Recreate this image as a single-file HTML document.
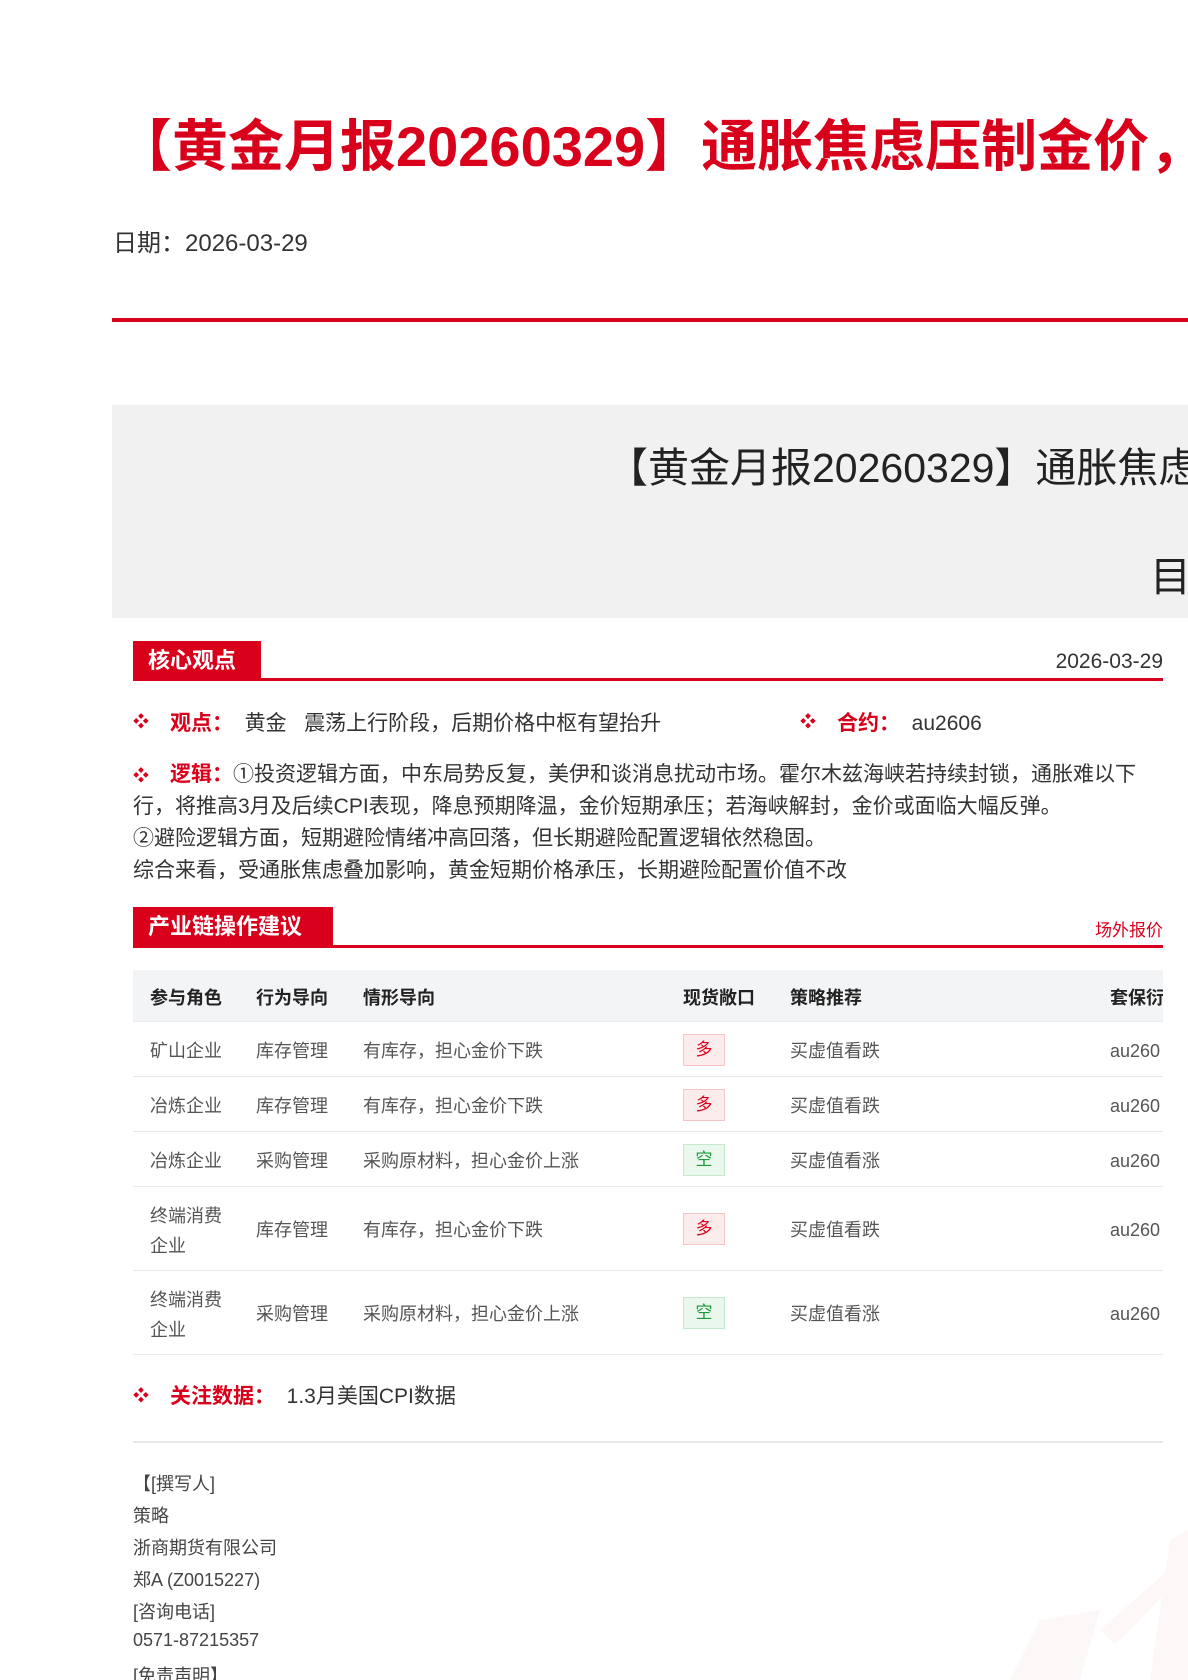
<!DOCTYPE html>
<html><head><meta charset="utf-8"><style>
*{margin:0;padding:0;box-sizing:border-box}
html,body{width:1188px;height:1680px;overflow:hidden}
body{background:#fff;position:relative;font-family:"Liberation Sans","Noto Sans CJK SC",sans-serif;color:#333}
.clip{position:absolute;left:0;top:0;width:1188px;height:1680px;overflow:hidden}
.a{position:absolute;white-space:nowrap}
.red{color:#d9001b}
.tag{position:absolute;left:133px;width:128px;height:40px;background:#d9001b;color:#fff;font-size:22px;font-weight:bold;line-height:40px;padding-left:15px}
.rl{position:absolute;left:133px;width:1030px;height:3px;background:#d9001b}
.dot{position:absolute;color:#d9001b;font-size:16px}
.row{position:absolute;left:133px;width:1030px;border-bottom:1px solid #e6e9ee}
.c{position:absolute;font-size:18px;line-height:24px;color:#555;white-space:nowrap}
.b{position:absolute;left:683px;width:42px;height:32px;font-size:17px;text-align:center;line-height:30px}
.bm{background:#fdecec;border:1px solid #f7c5c5;color:#d9001b}
.bk{background:#e9f7ec;border:1px solid #c3e8cb;color:#1a9a3a}
.f{position:absolute;left:133px;font-size:18px;color:#444}
</style></head><body><div class="clip">
<svg class="a" style="left:900px;top:1480px;opacity:.5" width="288" height="200"><polygon points="270,60 288,50 288,200 250,200" fill="#fdf0f0"/><polygon points="110,200 140,140 200,130 180,200" fill="#fdf3f3"/><polygon points="200,150 280,80 288,90 215,165" fill="#fdf0f0"/></svg>
<div class="a red" style="left:116px;top:112px;font-size:56px;font-weight:bold;line-height:70px;width:1072px;overflow:hidden">【黄金月报20260329】通胀焦虑压制金价，</div>
<div class="a" style="left:113px;top:223px;font-size:24px;color:#333">日期：2026-03-29</div>
<div class="a" style="left:112px;top:318px;width:1076px;height:4px;background:#d9001b"></div>
<div class="a" style="left:112px;top:405px;width:1076px;height:213px;background:#f1f1f1;overflow:hidden">
<div class="a" style="left:495px;top:29px;font-size:41px;color:#222">【黄金月报20260329】通胀焦虑压制</div>
<div class="a" style="left:1038px;top:138px;font-size:41px;color:#222">目</div>
</div>
<div class="tag" style="top:641px">核心观点</div>
<div class="rl" style="top:678px"></div>
<div class="a" style="right:25px;top:650px;font-size:21px;color:#333">2026-03-29</div>
<div class="dot" style="left:133px;top:708px">❖</div>
<div class="a" style="left:170px;top:707px;font-size:21px"><b class="red">观点：</b>&nbsp; 黄金 &nbsp;&nbsp;震荡上行阶段，后期价格中枢有望抬升</div>
<div class="dot" style="left:800px;top:708px">❖</div>
<div class="a" style="left:837px;top:707px;font-size:21px"><b class="red">合约：</b>&nbsp; au2606</div>
<div class="dot" style="left:133px;top:762px">❖</div>
<div class="a" style="left:133px;top:759px;font-size:21px;line-height:32px"><span style="margin-left:37px"><b class="red">逻辑：</b></span>①投资逻辑方面，中东局势反复，美伊和谈消息扰动市场。霍尔木兹海峡若持续封锁，通胀难以下<br>行，将推高3月及后续CPI表现，降息预期降温，金价短期承压；若海峡解封，金价或面临大幅反弹。<br>②避险逻辑方面，短期避险情绪冲高回落，但长期避险配置逻辑依然稳固。<br>综合来看，受通胀焦虑叠加影响，黄金短期价格承压，长期避险配置价值不改</div>
<div class="tag" style="top:907px;width:200px">产业链操作建议</div>
<div class="rl" style="top:945px"></div>
<div class="a red" style="right:25px;top:916px;font-size:17px">场外报价</div>
<div class="a" style="left:133px;top:970px;width:1030px;height:52px;background:#f3f4f6;border-bottom:1px solid #e6e9ee"></div>
<div class="c" style="left:150px;top:986px;color:#222;font-weight:bold">参与角色</div>
<div class="c" style="left:256px;top:986px;color:#222;font-weight:bold">行为导向</div>
<div class="c" style="left:363px;top:986px;color:#222;font-weight:bold">情形导向</div>
<div class="c" style="left:683px;top:986px;color:#222;font-weight:bold">现货敞口</div>
<div class="c" style="left:790px;top:986px;color:#222;font-weight:bold">策略推荐</div>
<div class="c" style="left:1110px;top:986px;color:#222;font-weight:bold;width:53px;overflow:hidden">套保衍</div>

<div class="row" style="top:1022px;height:55px"></div>
<div class="c" style="left:150px;top:1039px">矿山企业</div><div class="c" style="left:256px;top:1039px">库存管理</div><div class="c" style="left:363px;top:1039px">有库存，担心金价下跌</div><div class="b bm" style="top:1034px">多</div><div class="c" style="left:790px;top:1039px">买虚值看跌</div><div class="c" style="left:1110px;top:1039px">au260</div>

<div class="row" style="top:1077px;height:55px"></div>
<div class="c" style="left:150px;top:1094px">冶炼企业</div><div class="c" style="left:256px;top:1094px">库存管理</div><div class="c" style="left:363px;top:1094px">有库存，担心金价下跌</div><div class="b bm" style="top:1089px">多</div><div class="c" style="left:790px;top:1094px">买虚值看跌</div><div class="c" style="left:1110px;top:1094px">au260</div>

<div class="row" style="top:1132px;height:55px"></div>
<div class="c" style="left:150px;top:1149px">冶炼企业</div><div class="c" style="left:256px;top:1149px">采购管理</div><div class="c" style="left:363px;top:1149px">采购原材料，担心金价上涨</div><div class="b bk" style="top:1144px">空</div><div class="c" style="left:790px;top:1149px">买虚值看涨</div><div class="c" style="left:1110px;top:1149px">au260</div>

<div class="row" style="top:1187px;height:84px"></div>
<div class="c" style="left:150px;top:1201px;line-height:30px">终端消费<br>企业</div><div class="c" style="left:256px;top:1218px">库存管理</div><div class="c" style="left:363px;top:1218px">有库存，担心金价下跌</div><div class="b bm" style="top:1213px">多</div><div class="c" style="left:790px;top:1218px">买虚值看跌</div><div class="c" style="left:1110px;top:1218px">au260</div>

<div class="row" style="top:1271px;height:84px"></div>
<div class="c" style="left:150px;top:1285px;line-height:30px">终端消费<br>企业</div><div class="c" style="left:256px;top:1302px">采购管理</div><div class="c" style="left:363px;top:1302px">采购原材料，担心金价上涨</div><div class="b bk" style="top:1297px">空</div><div class="c" style="left:790px;top:1302px">买虚值看涨</div><div class="c" style="left:1110px;top:1302px">au260</div>

<div class="dot" style="left:133px;top:1382px">❖</div>
<div class="a" style="left:170px;top:1380px;font-size:21px"><b class="red">关注数据：</b>&nbsp; 1.3月美国CPI数据</div>
<div class="a" style="left:133px;top:1441px;width:1030px;height:2px;background:#e8e8e8"></div>
<div class="f" style="top:1470px">【[撰写人]</div>
<div class="f" style="top:1502px">策略</div>
<div class="f" style="top:1534px">浙商期货有限公司</div>
<div class="f" style="top:1566px">郑A (Z0015227)</div>
<div class="f" style="top:1598px">[咨询电话]</div>
<div class="f" style="top:1630px">0571-87215357</div>
<div class="f" style="top:1662px">[免责声明】</div>
</div></body></html>
